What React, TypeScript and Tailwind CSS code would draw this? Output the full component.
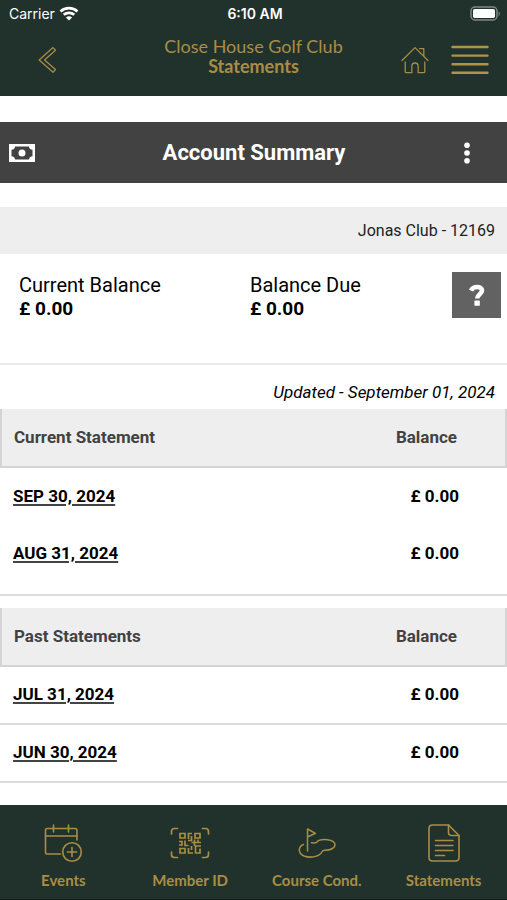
import React from "react";

type Statement = { date: string; amount: string };

const currentStatements: Statement[] = [
  { date: "SEP 30, 2024", amount: "£ 0.00" },
  { date: "AUG 31, 2024", amount: "£ 0.00" },
];

const pastStatements: Statement[] = [
  { date: "JUL 31, 2024", amount: "£ 0.00" },
  { date: "JUN 30, 2024", amount: "£ 0.00" },
];

function WifiIcon() {
  return (
    <svg width="20" height="16" viewBox="0 0 20 16" fill="none" stroke="#fff" strokeWidth="2.700" aria-hidden="true">
      <path d="M1.500 5.400C6.200.9 13.800.9 18.500 5.400" />
      <path d="M4.700 8.800C7.700 6.100 12.300 6.100 15.300 8.800" />
      <path d="M10 14.500 6.900 11.400C8.600 9.900 11.400 9.900 13.100 11.400Z" fill="#fff" stroke="none" />
    </svg>
  );
}

function BatteryIcon() {
  return (
    <svg width="31" height="16" viewBox="0 0 31 16" fill="none" aria-hidden="true">
      <rect x="1" y="1" width="26" height="13" rx="4" stroke="#7d8884" strokeWidth="1.500" />
      <rect x="3" y="3" width="22" height="9" rx="1.800" fill="#fff" />
      <path d="M28.600 5.500c1.600.6 1.600 4 0 4.600z" fill="#7d8884" />
    </svg>
  );
}

function BackIcon() {
  return (
    <svg width="20" height="28" viewBox="0 0 20 28" fill="none" stroke="#a58b49" strokeWidth="1.300" strokeLinejoin="round" aria-hidden="true">
      <path d="M15 1.600 1.200 14 15 26.200 17.500 23.600 6.500 14 17.500 4.200Z" />
    </svg>
  );
}

function HomeIcon() {
  return (
    <svg width="28" height="28" viewBox="0 0 28 28" fill="none" stroke="#a58b49" strokeWidth="1.300" strokeLinecap="round" strokeLinejoin="round" aria-hidden="true">
      <path d="M1 14.500 14 1.600 27 14.500" />
      <path d="M18.500 2.600h4.300v7.200" />
      <path d="M4.200 16v9.500c0 .8.400 1.200 1.200 1.200h5.400v-6.400c0-4.400 6.400-4.400 6.400 0v6.400h5.400c.8 0 1.200-.4 1.200-1.200V16" />
    </svg>
  );
}

function MenuIcon() {
  return (
    <svg width="38" height="30" viewBox="0 0 38 30" stroke="#b0934b" strokeWidth="2.400" strokeLinecap="round" aria-hidden="true">
      <path d="M1.500 2h35M1.500 10.600h35M1.500 19.200h35M1.500 27.800h35" />
    </svg>
  );
}

function MoneyIcon() {
  return (
    <svg width="26" height="18" viewBox="0 0 26 18" aria-hidden="true">
      <path fill="#fff" fillRule="evenodd" d="M0 0h26v18H0ZM6 2.500c0 2-1.500 3.300-3.500 3.300v6.400c2 0 3.500 1.300 3.500 3.300h14c0-2 1.500-3.300 3.500-3.300V5.800c-2 0-3.500-1.300-3.500-3.300Z" />
      <circle cx="13" cy="9" r="3.500" fill="#fff" />
    </svg>
  );
}

function MoreIcon() {
  return (
    <svg width="8" height="22" viewBox="0 0 8 22" fill="#fff" aria-hidden="true">
      <circle cx="4" cy="3.200" r="2.800" />
      <circle cx="4" cy="11" r="2.800" />
      <circle cx="4" cy="18.800" r="2.800" />
    </svg>
  );
}

function HelpIcon() {
  return (
    <svg width="16" height="22" viewBox="0 0 16 22" fill="none" aria-hidden="true">
      <path d="M2 6.600C4 1.800 13 1.800 13 6.600c0 3.800-4.800 3.600-4.800 8" stroke="#fff" strokeWidth="4.600" />
      <rect x="5.400" y="16.600" width="5.400" height="5.200" rx=".6" fill="#fff" />
    </svg>
  );
}

function EventsIcon() {
  return (
    <svg width="40" height="40" viewBox="0 0 40 40" fill="none" stroke="#a98d45" strokeWidth="1.600" strokeLinecap="round" aria-hidden="true">
      <path d="M17.500 31H4.200c-1 0-1.700-.7-1.700-1.700V7.200c0-1 .7-1.700 1.700-1.700h28c1 0 1.700.7 1.700 1.700V17" />
      <path d="M2.500 13h31.400M10.500 2v7M25.500 2v7" />
      <circle cx="29" cy="29" r="9.300" />
      <path d="M29 24.500v9M24.500 29h9" />
    </svg>
  );
}

function MemberIcon() {
  return (
    <svg width="40" height="40" viewBox="0 0 40 40" fill="none" stroke="#a98d45" strokeWidth="1.700" aria-hidden="true">
      <path d="M1.500 11V8.500c0-2 1-3 3-3H7.500M32.500 5.500h3c2 0 3 1 3 3V11M1.500 29v2.500c0 2 1 3 3 3H7.500M32.500 34.500h3c2 0 3-1 3-3V29" strokeLinecap="round" />
      <path d="M10 10.500h5v4.500h-5zM25 10.500h5v4.500h-5zM10 25.500h5v4.500h-5z" />
      <path d="M18.500 16v-5.500H22M21.500 13v4.500H18M9 18.500h3v3.500h-3M15 17.500v5h3.500M21.500 19.500h9.500M24.500 16.500v6.500M28 16.500v3M31 23h-5.500v7h4.500v-4.500M18.500 25v5H23M21.500 23v4" />
    </svg>
  );
}

function CourseIcon() {
  return (
    <svg width="40" height="40" viewBox="0 0 40 40" fill="none" stroke="#a98d45" strokeWidth="1.500" strokeLinecap="round" strokeLinejoin="round" aria-hidden="true">
      <path d="M10.500 28V6l8 4.300-8 3.700" />
      <path d="M6.500 21.500C1 23.500.7 30.500 7 33c6.500 2.400 15.500.8 18.200-4.500.5-1 1.300-1.300 2.500-1.300 5.800.1 10.300-2.200 10.300-5.400 0-5.500-14.500-7-18.300-2.600-.9 1-2.400.8-5.200.6" />
    </svg>
  );
}

function StatementsIcon() {
  return (
    <svg width="40" height="40" viewBox="0 0 40 40" fill="none" stroke="#a98d45" strokeWidth="1.600" strokeLinecap="round" strokeLinejoin="round" aria-hidden="true">
      <path d="M24.500 2H8.500c-2.200 0-3.500 1.300-3.500 3.500v29C5 36.700 6.300 38 8.500 38h23c2.200 0 3.500-1.300 3.500-3.500V12.500Z" />
      <path d="M24.500 2v7.500c0 2 1 3 3 3H35" />
      <path d="M11.500 17.500h17.500M11.500 22.500h17.500M11.500 27.500h17.500M11.500 32.500h9" />
    </svg>
  );
}

function StatementTable({
  title,
  rows,
  ruled = false,
}: {
  title: string;
  rows: Statement[];
  ruled?: boolean;
}) {
  return (
    <table className="w-full border-separate border-spacing-0 text-[17px] font-bold">
      <thead>
        <tr className="h-[59px] bg-[#eeeeee] text-[#424242]">
          <th scope="col" className="border-b-2 border-l-2 border-[#d4d4d4] pl-3 text-left">
            {title}
          </th>
          <th scope="col" className="border-r-2 border-b-2 border-[#d4d4d4] pr-12 text-right">
            Balance
          </th>
        </tr>
      </thead>
      <tbody className="text-black">
        {rows.map((row) => (
          <tr key={row.date} className={ruled ? "h-[58px]" : "h-[57px]"}>
            <td className={ruled ? "border-b-2 border-[#dcdcdc] pl-[13px]" : "pl-[13px]"}>
              <a href="#statement" className="underline decoration-[#444444] decoration-2 underline-offset-2">
                {row.date}
              </a>
            </td>
            <td className={ruled ? "border-b-2 border-[#dcdcdc] pr-12 text-right" : "pr-12 text-right"}>
              {row.amount}
            </td>
          </tr>
        ))}
      </tbody>
    </table>
  );
}

const tabs = [
  { label: "Events", Icon: EventsIcon },
  { label: "Member ID", Icon: MemberIcon },
  { label: "Course Cond.", Icon: CourseIcon },
  { label: "Statements", Icon: StatementsIcon },
];

export default function App() {
  return (
    <div className="flex min-h-screen flex-col bg-white font-['Roboto',sans-serif] text-black">
      <header className="bg-[#21322c] pb-3">
        <div className="grid h-7 grid-cols-[1fr_auto_1fr] items-center pr-[6px] pl-[9px] font-['Inter',sans-serif] text-sm text-white">
          <div className="flex items-center gap-1">
            <span>Carrier</span>
            <WifiIcon />
          </div>
          <span className="text-center font-semibold">6:10 AM</span>
          <div className="flex justify-end">
            <BatteryIcon />
          </div>
        </div>
        <div className="grid h-14 grid-cols-[1fr_auto_1fr] items-center px-[18px]">
          <button type="button" aria-label="Back" className="mt-2 ml-5 justify-self-start">
            <BackIcon />
          </button>
          <h1 className="text-center font-['Lato',sans-serif] text-lg leading-5 font-normal text-[#a98d45]">
            Close House Golf Club
            <span className="block font-bold">Statements</span>
          </h1>
          <div className="mt-2 flex items-center gap-[22px] justify-self-end">
            <button type="button" aria-label="Home">
              <HomeIcon />
            </button>
            <button type="button" aria-label="Menu">
              <MenuIcon />
            </button>
          </div>
        </div>
      </header>

      <main className="flex-1 pt-[26px] pb-5">
        <div className="grid h-[61px] grid-cols-[1fr_auto_1fr] items-center bg-[#424242] pr-9 pl-[9px] text-white">
          <MoneyIcon />
          <h2 className="pl-7 text-[22px] font-bold">Account Summary</h2>
          <button type="button" aria-label="More options" className="justify-self-end">
            <MoreIcon />
          </button>
        </div>

        <p className="mt-6 flex h-[47px] items-center justify-end bg-[#eeeeee] px-3 text-base text-[#222222]">
          Jonas Club - 12169
        </p>

        <section className="flex h-[111px] items-start border-b-2 border-[#eaeaea] pt-[18px] pr-[6px] pl-[19px] leading-6">
          <dl className="grid flex-1 grid-cols-[8fr_7fr] pt-px">
            <div>
              <dt className="text-xl leading-6">Current Balance</dt>
              <dd className="text-[19px] leading-6 font-bold">£ 0.00</dd>
            </div>
            <div>
              <dt className="text-xl leading-6">Balance Due</dt>
              <dd className="text-[19px] leading-6 font-bold">£ 0.00</dd>
            </div>
          </dl>
          <button
            type="button"
            aria-label="Help"
            className="flex h-[46px] w-[49px] items-center justify-center bg-[#626262]"
          >
            <HelpIcon />
          </button>
        </section>

        <p className="flex h-11 items-end justify-end px-3 pb-1 text-[17px] italic">Updated - September 01, 2024</p>

        <div className="border-b-2 border-[#dcdcdc] pb-3">
          <StatementTable title="Current Statement" rows={currentStatements} />
        </div>
        <div className="mt-3">
          <StatementTable title="Past Statements" rows={pastStatements} ruled />
        </div>
      </main>

      <nav className="grid h-[95px] grid-cols-4 border-b border-[#111d1b] bg-[#21322c] font-['Lato',sans-serif] text-[15px] leading-5 font-bold text-[#a98d45]">
        {tabs.map(({ label, Icon }) => (
          <a key={label} href="#tab" className="flex flex-col items-center gap-[7px] pt-[18px]">
            <Icon />
            {label}
          </a>
        ))}
      </nav>
    </div>
  );
}
